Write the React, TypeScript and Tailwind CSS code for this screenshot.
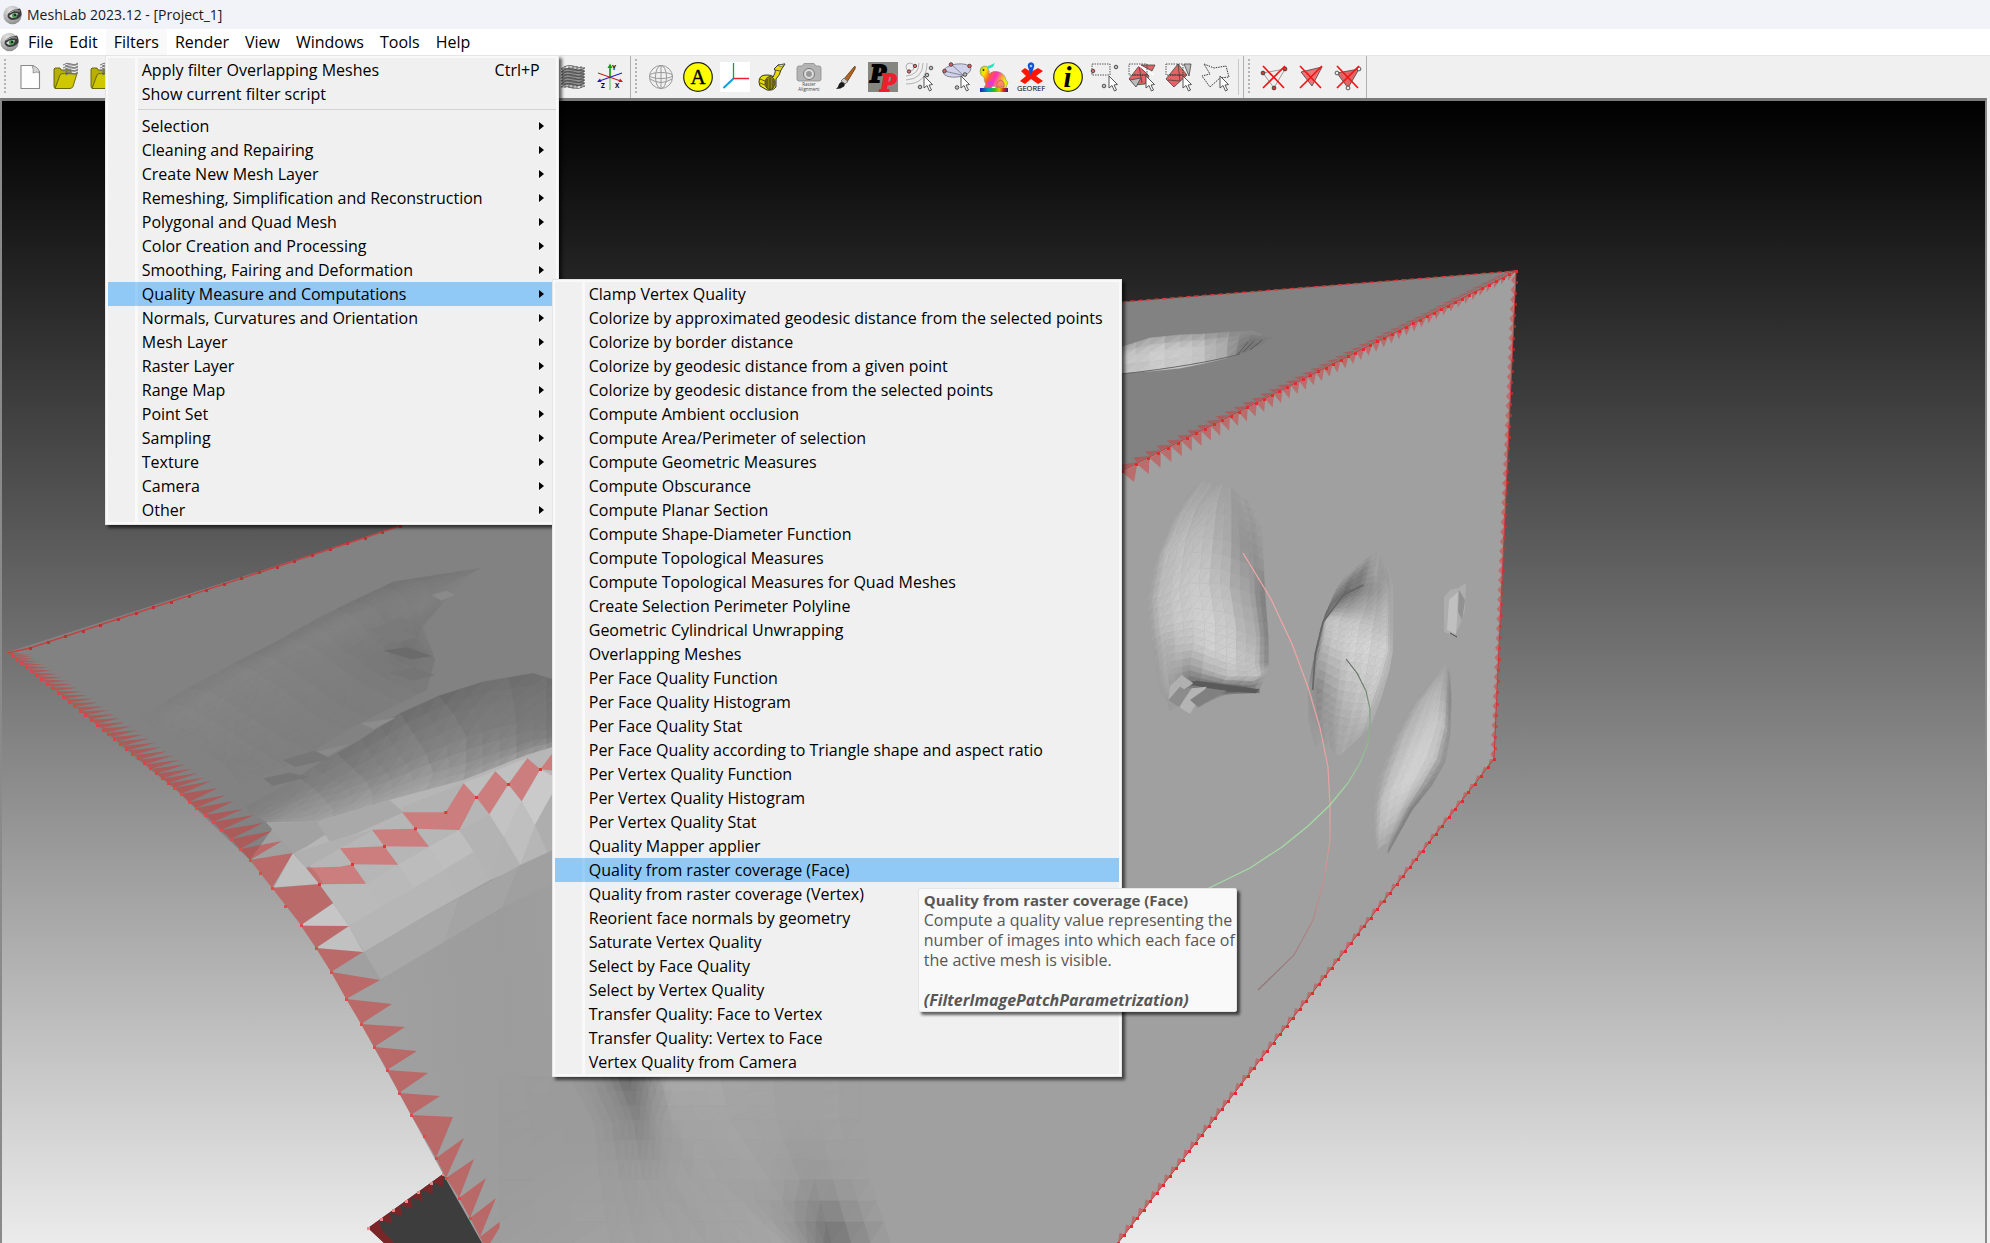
import type { ReactNode } from 'react';

interface MenuEntry {
  label: string;
  shortcut?: string;
  submenu?: boolean;
  separatorAfter?: boolean;
}

const MENU_BAR = ['File', 'Edit', 'Filters', 'Render', 'View', 'Windows', 'Tools', 'Help'];

const FILTER_MENU: MenuEntry[] = [
  { label: 'Apply filter Overlapping Meshes', shortcut: 'Ctrl+P' },
  { label: 'Show current filter script', separatorAfter: true },
  { label: 'Selection', submenu: true },
  { label: 'Cleaning and Repairing', submenu: true },
  { label: 'Create New Mesh Layer', submenu: true },
  { label: 'Remeshing, Simplification and Reconstruction', submenu: true },
  { label: 'Polygonal and Quad Mesh', submenu: true },
  { label: 'Color Creation and Processing', submenu: true },
  { label: 'Smoothing, Fairing and Deformation', submenu: true },
  { label: 'Quality Measure and Computations', submenu: true },
  { label: 'Normals, Curvatures and Orientation', submenu: true },
  { label: 'Mesh Layer', submenu: true },
  { label: 'Raster Layer', submenu: true },
  { label: 'Range Map', submenu: true },
  { label: 'Point Set', submenu: true },
  { label: 'Sampling', submenu: true },
  { label: 'Texture', submenu: true },
  { label: 'Camera', submenu: true },
  { label: 'Other', submenu: true },
];

const QUALITY_MENU: string[] = [
  'Clamp Vertex Quality',
  'Colorize by approximated geodesic distance from the selected points',
  'Colorize by border distance',
  'Colorize by geodesic distance from a given point',
  'Colorize by geodesic distance from the selected points',
  'Compute Ambient occlusion',
  'Compute Area/Perimeter of selection',
  'Compute Geometric Measures',
  'Compute Obscurance',
  'Compute Planar Section',
  'Compute Shape-Diameter Function',
  'Compute Topological Measures',
  'Compute Topological Measures for Quad Meshes',
  'Create Selection Perimeter Polyline',
  'Geometric Cylindrical Unwrapping',
  'Overlapping Meshes',
  'Per Face Quality Function',
  'Per Face Quality Histogram',
  'Per Face Quality Stat',
  'Per Face Quality according to Triangle shape and aspect ratio',
  'Per Vertex Quality Function',
  'Per Vertex Quality Histogram',
  'Per Vertex Quality Stat',
  'Quality Mapper applier',
  'Quality from raster coverage (Face)',
  'Quality from raster coverage (Vertex)',
  'Reorient face normals by geometry',
  'Saturate Vertex Quality',
  'Select by Face Quality',
  'Select by Vertex Quality',
  'Transfer Quality: Face to Vertex',
  'Transfer Quality: Vertex to Face',
  'Vertex Quality from Camera',
];

const OPEN_MENU = 'Filters';
const OPEN_SUBMENU = 'Quality Measure and Computations';
const HOVERED_FILTER = 'Quality from raster coverage (Face)';

/* ---------- Icons ---------- */

function EyeLogo() {
  return (
    <svg viewBox="0 0 20 20" className="size-5 shrink-0" aria-hidden="true">
      <defs>
        <radialGradient id="logo" cx="0.4" cy="0.25" r="0.8">
          <stop offset="0" stopColor="#e4e4e4" />
          <stop offset="0.6" stopColor="#b4b4b4" />
          <stop offset="1" stopColor="#888" />
        </radialGradient>
      </defs>
      <circle cx="9.500" cy="10" r="9.200" fill="url(#logo)" />
      <path d="M5 9 Q9 4 14 4.500 L17 3.500 Q19.500 8 18 11 Q15 15 9 15 Q5 14 4.500 11Z" fill="#3c3c3c" />
      <path d="M6 8 Q11 4.500 17 6" stroke="#aaa" strokeWidth="1" fill="none" />
      <path d="M6 11 Q10 7 15 8.500 Q14 12.500 9 13Z" fill="#d5ddd5" />
      <circle cx="11.500" cy="10.500" r="2.500" fill="#4a9455" />
      <circle cx="12" cy="10" r="1.100" fill="#101810" />
    </svg>
  );
}

function Svg({ children }: { children: ReactNode }) {
  return (
    <svg viewBox="0 0 30 30" className="size-[30px] overflow-visible" aria-hidden="true">
      {children}
    </svg>
  );
}

const cursor = (
  <path d="M19 14 L19 26 L22 23.500 L24.500 29 L26.500 28 L24 23 L27.500 22.500Z" fill="#fff" stroke="#444" strokeWidth="0.9" />
);

const newIcon = (
  <Svg>
    <path d="M6 3.500 H18 L24.500 10 V26.500 H6Z" fill="#fdfdfd" stroke="#8a8a8a" strokeWidth="1.100" />
    <path d="M17 3.500 Q19 8 18 11 Q22 9 24.500 11 Q24 5 17 3.500Z" fill="#d4d4d4" stroke="#888" strokeWidth="0.8" />
  </Svg>
);

const openIcon = (
  <Svg>
    <path d="M2 7 L3 6 H8 L9 8 H19 V14 L16 26 H3 Q2 26 2 24Z" fill="#b8b000" stroke="#5f5b00" strokeWidth="0.9" />
    <path d="M8 13 Q9 11.500 11 11.500 H25 L21 24.500 Q20 26.500 18 26.500 H3Z" fill="#cfc800" stroke="#5f5b00" strokeWidth="0.9" />
    {[1, 4, 7, 10].map(y => (
      <path key={y} d={`M11 ${y + 2} q4 -3 8 -1 t7 -1 M13 ${y + 3} q4 -2 7 -1 t6 -1`} fill="none" stroke="#777" strokeWidth="1" />
    ))}
  </Svg>
);

const gridIcon = (
  <Svg>
    <path d="M4 8 L14 4 L26 8 V22 L15 27 L4 23Z" fill="#bbb" />
    <g fill="none" stroke="#444" strokeWidth="0.7">
      {[7, 10, 13, 16, 19, 22, 25].map(y => (
        <path key={y} d={`M3 ${y} Q9 ${y - 5} 15 ${y - 3} T27 ${y - 1} Q20 ${y + 3} 15 ${y + 1} T3 ${y}`} />
      ))}
      {[5, 7, 9, 11, 13, 15, 17, 19, 21, 23, 25].map((x, i) => (
        <path key={x} d={`M${x} ${i % 2 ? 4 : 7} V${i % 2 ? 26 : 23}`} />
      ))}
    </g>
  </Svg>
);

const axesIcon = (
  <Svg>
    <path d="M15 28 V3" stroke="#9bd69b" strokeWidth="2" />
    <path d="M15 15 V4" stroke="#12a012" strokeWidth="1.500" />
    <path d="M12.500 6 L15 1.500 L17.500 6Z" fill="#12a012" />
    <path d="M3 11 L27 19.500" stroke="#c22" strokeWidth="1.200" />
    <path d="M28 20 L23.500 20 L25 16.500Z" fill="#c22" />
    <path d="M27 11 L3 19.500" stroke="#22b" strokeWidth="1.200" />
    <path d="M2 20 L6.500 20 L5 16.500Z" fill="#22b" />
    <text x="17" y="8" fontSize="6.500" fontWeight="700">Y</text>
    <text x="6" y="26" fontSize="6.500" fontWeight="700">Z</text>
    <text x="20" y="26" fontSize="6.500" fontWeight="700">X</text>
  </Svg>
);

const globeIcon = (
  <Svg>
    <g fill="none" stroke="#999" strokeWidth="1">
      <circle cx="15" cy="15" r="11.500" />
      <ellipse cx="15" cy="15" rx="5.500" ry="11.500" />
      <ellipse cx="15" cy="13.500" rx="11.500" ry="3" />
      <path d="M15 3 V27 M4 17 Q15 24 26 17" />
    </g>
  </Svg>
);

const labelIcon = (
  <Svg>
    <circle cx="15" cy="15" r="14.300" fill="#ff0" stroke="#222" strokeWidth="1.200" />
    <text x="15" y="22" textAnchor="middle" fontFamily="Liberation Serif" fontSize="21" stroke="#000" strokeWidth="0.4">A</text>
  </Svg>
);

const axisIcon = (
  <Svg>
    <rect width="30" height="30" fill="#fff" />
    <path d="M13.500 1 V16" stroke="#1a9a50" strokeWidth="1.300" />
    <path d="M13 16.500 H29" stroke="#ee2030" strokeWidth="1.500" />
    <path d="M13.500 16.500 L3.500 26" stroke="#00a2e8" strokeWidth="2" />
  </Svg>
);

const tapeIcon = (
  <Svg>
    <path d="M2 20 Q2 13 9 13 Q16 13 16 15 Q20 8 17 7 L21 3 L28 2 L24 8 Q23 13 19 17 V25 Q16 29 10 28 L3 24Z" fill="#e6dc00" stroke="#222" strokeWidth="0.9" />
    <ellipse cx="13" cy="21" rx="5" ry="6.500" fill="#8d8600" stroke="#333" strokeWidth="0.8" />
    <path d="M3 17 L8 19 M3 21 L8 23 M18 8 L23 9 M10 17 V26 M13 16 V27 M16 17 V26" stroke="#333" strokeWidth="0.8" />
    <path d="M21 3 L28 2 L24 5Z" fill="#ddd" stroke="#444" strokeWidth="0.6" />
  </Svg>
);

const cameraIcon = (
  <Svg>
    <path d="M3 6 Q3 4 5 4 L8 4 L10 1.500 H20 L22 4 H25 Q27 4 27 6 V17 Q27 19 25 19 H5 Q3 19 3 17Z" fill="#b4b4b4" stroke="#8d8d8d" strokeWidth="0.8" />
    <circle cx="15" cy="12" r="5.500" fill="#dedede" stroke="#777" />
    <circle cx="15" cy="12" r="3" fill="#999" />
    <text x="15" y="24" textAnchor="middle" fontSize="4.500" fill="#444">Raster</text>
    <text x="15" y="29" textAnchor="middle" fontSize="4.500" fill="#444">Alignment</text>
  </Svg>
);

const brushIcon = (
  <Svg>
    <path d="M13 17 L23 5 Q25 3 24 7 L16 20Z" fill="#b5651d" stroke="#5a3210" strokeWidth="0.8" />
    <path d="M10 19 L13 16 L17 19.500 L14 22Z" fill="#ccc" stroke="#555" strokeWidth="0.7" />
    <path d="M5 27 Q7 26 8 22 Q10 19 12 20.500 Q15 22 13 24.500 Q10 27 5 27Z" fill="#1b1b1b" />
  </Svg>
);

const ppIcon = (
  <Svg>
    <rect width="30" height="30" fill="#868680" />
    <text x="2" y="20" fontFamily="Liberation Serif" fontStyle="italic" fontWeight="700" fontSize="26" stroke="#000" strokeWidth="2">P</text>
    <text x="12" y="29" fontFamily="Liberation Serif" fontStyle="italic" fontWeight="700" fontSize="26" fill="#e8212a" stroke="#e8212a" strokeWidth="2">P</text>
  </Svg>
);

const pointWaveIcon = (
  <Svg>
    <g fill="none" stroke="#aaa" strokeWidth="0.9">
      <circle cx="5" cy="5" r="4" />
      <path d="M14 1 Q14 13 1 14 M18 1 Q18 17 1 18 M22 1 Q22 22 1 22" />
    </g>
    <g stroke="#333" strokeWidth="0.8">
      <circle cx="10" cy="4" r="1.700" fill="#e66" />
      <circle cx="4" cy="9.500" r="1.700" fill="#e66" />
      <circle cx="26" cy="6" r="1.800" fill="#bbb" />
      <circle cx="22" cy="13" r="1.800" fill="#bbb" />
      <circle cx="15" cy="25" r="1.800" fill="#bbb" />
    </g>
    {cursor}
  </Svg>
);

const ellipseSelectIcon = (
  <Svg>
    <ellipse cx="15" cy="8.500" rx="14" ry="6.500" fill="#cfd2e8" stroke="#778" strokeWidth="0.8" transform="rotate(-8 15 8.500)" />
    <path d="M2 9 L24 14 M9 2 L22 14" stroke="#667" strokeWidth="0.7" />
    <g stroke="#333" strokeWidth="0.8">
      <circle cx="2.500" cy="9" r="1.800" fill="#e55" />
      <circle cx="9" cy="2.500" r="1.800" fill="#e55" />
      <circle cx="27.500" cy="4" r="1.800" fill="#e55" />
      <circle cx="23" cy="12.500" r="1.800" fill="#bbb" />
      <circle cx="15" cy="25.500" r="1.800" fill="#bbb" />
    </g>
    {cursor}
  </Svg>
);

const bunnyIcon = (
  <Svg>
    <defs>
      <linearGradient id="rainbow" x1="0" x2="1" y1="0" y2="0.4">
        <stop offset="0" stopColor="#9be000" />
        <stop offset="0.25" stopColor="#ffe000" />
        <stop offset="0.45" stopColor="#ff5a30" />
        <stop offset="0.65" stopColor="#ff30c0" />
        <stop offset="0.85" stopColor="#ffa040" />
        <stop offset="1" stopColor="#e8f000" />
      </linearGradient>
      <linearGradient id="spectrum">
        <stop offset="0" stopColor="#2020b0" />
        <stop offset="0.3" stopColor="#00a0c0" />
        <stop offset="0.5" stopColor="#20c020" />
        <stop offset="0.7" stopColor="#e0c000" />
        <stop offset="0.85" stopColor="#d02020" />
        <stop offset="1" stopColor="#3020a0" />
      </linearGradient>
    </defs>
    <path
      d="M1 9 Q1 5 5 4 L8 4.500 L9 7 Q11 9 10 12 Q14 8 20 10 Q26 12 27 18 Q30 20 28 23 L27 26 H17 L16 24 Q13 24 12 26 H5 L7 22 Q5 20 5 15 Q1 14 1 9Z"
      fill="url(#rainbow)"
      stroke="#777"
      strokeWidth="0.5"
    />
    <path d="M8 4.500 L16 1 L14 5 L9 7Z" fill="#30e0c0" />
    <path d="M18 25 Q17 19 22 18 Q26 20 25 25Z" fill="#ff8a60" stroke="#a33a8a" strokeWidth="0.6" />
    <path d="M8 22 Q10 18 13 19 L15 23" fill="#d040e0" />
    <circle cx="4.500" cy="8" r="0.9" fill="#222" />
    <rect x="1" y="26" width="28" height="4" fill="url(#spectrum)" />
  </Svg>
);

const georefIcon = (
  <Svg>
    <path d="M5 9 L9 6 L15 10 L22 6 L27 9 L20 14 L27 19 L22 22 L15 17 L9 22 L4 19 L10 14Z" fill="#ff1500" />
    <path d="M15 14 L12 5 A3.300 3.300 0 1 1 18 5Z" fill="#1450d8" />
    <circle cx="15" cy="4" r="1.300" fill="#9cf" />
    <text x="15" y="29" textAnchor="middle" fontFamily="Open Sans" fontSize="7.500">GEOREF</text>
  </Svg>
);

const infoIcon = (
  <Svg>
    <circle cx="15" cy="15" r="14.300" fill="#ff0" stroke="#222" strokeWidth="1.200" />
    <text x="14.500" y="24.500" textAnchor="middle" fontFamily="Liberation Serif" fontStyle="italic" fontWeight="700" fontSize="29">i</text>
  </Svg>
);

const vertexSelectIcon = (
  <Svg>
    <rect x="2" y="2" width="18" height="11" fill="none" stroke="#333" strokeDasharray="1.500 1" strokeWidth="0.8" />
    <g stroke="#333" strokeWidth="0.8">
      <circle cx="3" cy="9" r="1.800" fill="#e66" />
      <circle cx="26" cy="5" r="1.800" fill="#bbb" />
      <circle cx="14" cy="24" r="1.800" fill="#bbb" />
    </g>
    {cursor}
  </Svg>
);

const faceSelectIcon = (
  <Svg>
    <path d="M12 4 L22 14 L18 22 L8 23 L2 17Z" fill="#e26464" stroke="#444" strokeWidth="0.8" />
    <path d="M14 3 H28 L25 9Z" fill="#e26464" stroke="#444" strokeWidth="0.8" />
    <path d="M3 18 L14 16 L9 25Z" fill="#bbb" stroke="#444" strokeWidth="0.8" />
    <path d="M6 13 H21 M12 4 L15 21" stroke="#444" strokeWidth="0.8" />
    <path d="M11 3 L27 13" stroke="#fff" strokeWidth="1.500" />
    <rect x="2" y="2" width="18" height="11" fill="none" stroke="#333" strokeDasharray="1.500 1" strokeWidth="0.8" />
    {cursor}
  </Svg>
);

const connectedSelectIcon = (
  <Svg>
    <path d="M14 2 L23 13 L10 25 L2 17Z" fill="#e26464" stroke="#444" strokeWidth="0.8" />
    <path d="M20 2 H27 L25 14Z" fill="#bbb" stroke="#444" strokeWidth="0.8" />
    <path d="M6 13 H22 M14 2 L16 19 M4 18 L16 19" stroke="#444" strokeWidth="0.8" />
    <rect x="2" y="2" width="17" height="11" fill="none" stroke="#333" strokeDasharray="1.500 1" strokeWidth="0.8" />
    {cursor}
  </Svg>
);

const lassoIcon = (
  <Svg>
    <path d="M3 2 L13 6 L25 4 L28 15 L19 16 L9 25 L1 14 L9 12Z" fill="none" stroke="#333" strokeDasharray="1.500 1" />
    {cursor}
  </Svg>
);

const redCross = <path d="M4 4 L25 26 M26 4 L4 26" stroke="#f31414" strokeWidth="1.700" />;

const deleteVertexIcon = (
  <Svg>
    <path d="M4 11 L26 7 L15 26Z" fill="#eee" stroke="#888" strokeWidth="0.8" />
    <g fill="#d33" stroke="#333" strokeWidth="0.8">
      <circle cx="4" cy="11" r="1.900" />
      <circle cx="26" cy="7" r="1.900" />
      <circle cx="15" cy="26" r="1.900" />
    </g>
    {redCross}
  </Svg>
);

const deleteFaceIcon = (
  <Svg>
    <path d="M5 10 L26 5 L16 24Z" fill="#ee7575" stroke="#444" strokeWidth="0.8" />
    {redCross}
  </Svg>
);

const deleteBothIcon = (
  <Svg>
    <path d="M4 11 L26 7 L15 26Z" fill="#e26464" stroke="#444" strokeWidth="0.8" />
    <g fill="#eee" stroke="#333" strokeWidth="0.8">
      <circle cx="4" cy="11" r="1.900" />
      <circle cx="26" cy="7" r="1.900" />
      <circle cx="15" cy="26" r="1.900" />
    </g>
    {redCross}
  </Svg>
);

const VIEW_TOOLS: [string, ReactNode][] = [
  ['Trackball', globeIcon],
  ['Labels', labelIcon],
  ['Axis', axisIcon],
  ['Measure', tapeIcon],
  ['Raster alignment', cameraIcon],
  ['Paint', brushIcon],
  ['PickPoints', ppIcon],
  ['Point selection', pointWaveIcon],
  ['Plane fitting', ellipseSelectIcon],
  ['Quality mapper', bunnyIcon],
  ['Georef', georefIcon],
  ['Info', infoIcon],
  ['Select vertices', vertexSelectIcon],
  ['Select faces', faceSelectIcon],
  ['Select connected', connectedSelectIcon],
  ['Polyline selection', lassoIcon],
];

const DELETE_TOOLS: [string, ReactNode][] = [
  ['Delete vertices', deleteVertexIcon],
  ['Delete faces', deleteFaceIcon],
  ['Delete faces and vertices', deleteBothIcon],
];

/* ---------- Mesh drawing ---------- */

type Pt = [number, number];
/** x, y, grey level */
type Node3 = [number, number, number];

const RED = '#d53333';

const lerp = (a: number, b: number, t: number) => a + (b - a) * t;

/** Row of small triangles along a line, leaning by (dx, dy) which may grow towards the end */
function teeth(from: Pt, to: Pt, count: number, startTip: Pt, endTip: Pt, ease = 1): string {
  let d = '';
  for (let i = 0; i < count; i++) {
    const a = Math.pow(i / count, ease);
    const b = Math.pow((i + 1) / count, ease);
    const ax = lerp(from[0], to[0], a);
    const ay = lerp(from[1], to[1], a);
    const bx = lerp(from[0], to[0], b);
    const by = lerp(from[1], to[1], b);
    const tx = ax + lerp(startTip[0], endTip[0], a);
    const ty = ay + lerp(startTip[1], endTip[1], a);
    d += `M${ax.toFixed(1)} ${ay.toFixed(1)}L${tx.toFixed(1)} ${ty.toFixed(1)}L${bx.toFixed(1)} ${by.toFixed(1)}Z`;
  }
  return d;
}

function dots(from: Pt, to: Pt, count: number, ease = 1): string {
  let d = '';
  for (let i = 0; i <= count; i++) {
    const t = Math.pow(i / count, ease);
    d += `M${(lerp(from[0], to[0], t) - 1).toFixed(0)} ${(lerp(from[1], to[1], t) - 1).toFixed(0)}h3v3h-3z`;
  }
  return d;
}

/** Point inside a cell of the control grid */
function sample(grid: Node3[][], r: number, c: number, u: number, v: number): Node3 {
  const mix = (k: 0 | 1 | 2) =>
    lerp(lerp(grid[r][c][k], grid[r][c + 1][k], u), lerp(grid[r + 1][c][k], grid[r + 1][c + 1][k], u), v);
  return [mix(0), mix(1), mix(2)];
}

/** Flat-shaded triangles spanned over a coarse grid of control points, lightly streaked by column */
function Surface({ grid, sub, grain }: { grid: Node3[][]; sub: number; grain: number }) {
  const faces: ReactNode[] = [];
  for (let r = 0; r < grid.length - 1; r++) {
    for (let c = 0; c < grid[r].length - 1; c++) {
      for (let i = 0; i < sub; i++) {
        for (let j = 0; j < sub; j++) {
          const a = sample(grid, r, c, j / sub, i / sub);
          const b = sample(grid, r, c, (j + 1) / sub, i / sub);
          const e = sample(grid, r, c, (j + 1) / sub, (i + 1) / sub);
          const f = sample(grid, r, c, j / sub, (i + 1) / sub);
          [[a, b, f], [b, e, f]].forEach((tri, k) => {
            const streak = (((c * sub + j) * 2) % 5) - 2;
            const wobble = streak * 0.4 + (k ? 0.3 : -0.3);
            const grey = Math.round((tri[0][2] + tri[1][2] + tri[2][2]) / 3 + wobble * grain);
            const fill = `rgb(${grey},${grey},${grey})`;
            faces.push(
              <polygon
                key={`${r}-${c}-${i}-${j}-${k}`}
                points={tri.map(p => `${p[0].toFixed(1)},${p[1].toFixed(1)}`).join(' ')}
                fill={fill}
                stroke={fill}
                strokeWidth="0.6"
              />,
            );
          });
        }
      }
    }
  }
  return <g>{faces}</g>;
}

/** Border faces along the curved left side: base, tip, next base */
const LEFT_TEETH = [
  '174,788 211,781 181,794', '181,794 218,788 189,802', '189,802 226,795 196,808', '196,808 234,801 205,815',
  '205,815 243,809 213,822', '213,822 254,815 221,830', '221,830 263,823 231,839', '231,839 272,831 240,849',
  '240,849 282,841 250,860', '250,860 293,853 272,888', '272,888 319,884 333,903 301,925',
  '301,926 349,926 316,948', '316,948 363,952 331,972', '331,972 380,980 346,999', '346,999 392,1004 361,1024',
  '361,1024 405,1027 374,1047', '374,1047 417,1051 387,1070', '387,1070 428,1073 399,1093',
  '399,1093 440,1096 411,1115', '411,1115 453,1117 436,1158', '436,1158 464,1138 446,1178',
  '446,1178 474,1159 459,1198', '459,1198 486,1178 470,1218', '470,1218 496,1198 480,1237',
  '480,1237 506,1217 486,1250',
];

const LEFT_DOTS: Pt[] = [
  [174, 788], [181, 794], [189, 802], [196, 808], [205, 815], [213, 822], [221, 830], [231, 839], [240, 849],
  [250, 860], [260, 873], [272, 888], [285, 906], [301, 925], [316, 948], [331, 972], [346, 999], [361, 1024],
  [374, 1047], [387, 1070], [399, 1093], [411, 1115], [424, 1136], [436, 1158], [446, 1178], [459, 1198], [470, 1218],
];

/** Crease faces, in thirds of a unit from (200, 640) */
const CREASE = [
  '318,683 420,680 457,673 498,731 358,733', '420,625 553,619 594,674 457,673', '516,569 646,566 687,620 553,619',
  '606,517 737,517 791,430 829,472 778,570 646,566', '829,472 886,394 925,433 868,523',
  '925,433 982,355 1021,388 965,484', '1021,388 1080,310 1080,394',
];

/** Upper depression, in thirds of a unit from (140, 530) */
const HOLLOW: Node3[][] = [
  [[0, 560, 130], [100, 500, 126], [280, 400, 124], [400, 340, 120], [540, 262, 121], [640, 212, 118], [760, 155, 116], [1020, 115, 120]],
  [[40, 590, 131], [180, 510, 132], [340, 420, 131], [460, 350, 130], [590, 290, 130], [700, 230, 126], [820, 180, 124], [1000, 125, 122]],
  [[150, 640, 131], [260, 560, 130], [420, 470, 129], [540, 400, 127], [640, 350, 124], [740, 280, 125], [830, 230, 128], [980, 145, 129]],
  [[250, 700, 129], [380, 640, 128], [530, 560, 126], [650, 480, 125], [740, 420, 120], [800, 360, 114], [840, 290, 120], [960, 160, 130]],
  [[300, 760, 130], [480, 690, 127], [620, 600, 126], [760, 530, 125], [860, 480, 124], [885, 390, 121], [850, 290, 128], [950, 170, 130]],
];

/** Dark back of the fold, in thirds of a unit from (200, 640) */
const FOLD: Node3[][] = [
  [[140, 500, 128], [250, 440, 126], [340, 380, 122], [480, 300, 114], [600, 220, 110], [715, 168, 107], [850, 125, 110], [1000, 100, 110], [1080, 125, 114]],
  [[150, 520, 132], [280, 470, 130], [400, 420, 130], [520, 350, 126], [640, 280, 123], [760, 220, 119], [880, 190, 119], [1000, 170, 117], [1080, 190, 117]],
  [[180, 535, 138], [300, 500, 142], [440, 450, 140], [560, 400, 136], [680, 340, 132], [800, 290, 128], [900, 260, 124], [1000, 240, 121], [1080, 250, 119]],
  [[200, 547, 148], [340, 525, 152], [460, 490, 154], [580, 445, 154], [700, 400, 152], [800, 370, 146], [900, 335, 138], [1000, 300, 128], [1080, 290, 126]],
  [[200, 550, 155], [340, 550, 160], [460, 515, 162], [570, 480, 164], [680, 450, 164], [790, 425, 162], [900, 378, 158], [1000, 342, 156], [1080, 318, 155]],
];

/** Lit facets of the fold, same local units as the crease */
const BUMP: [string, string][] = [
  ['485,250 588,233 520,268', '#8c8c8c'],
  ['350,335 450,311 382,348', '#8a8a8a'],
  ['250,360 345,332 390,357 285,380', '#777777'],
  ['190,415 270,398 325,411 218,437', '#767676'],
  ['200,548 350,545 568,480 790,420 980,345 1056,322 1080,318 1080,640 869,720 690,820 492,936 446,858 350,700', '#b6b6b6'],
  ['200,548 350,545 460,530 318,620 280,640', '#a2a2a2'],
  ['350,545 568,480 610,517 470,580 390,605', '#a9a9a9'],
  ['280,640 390,605 520,570 420,625 318,683', '#b0b0b0'],
  ['610,500 790,430 740,515 606,517', '#b2b2b2'],
  ['790,430 886,392 829,472', '#bebebe'],
  ['886,392 980,355 925,433', '#c0c0c0'],
  ['980,355 1080,312 1021,388', '#b7b7b7'],
  ['222,742 278,640 318,683 358,733', '#bfbfbf'],
  ['303,856 400,790 446,858', '#c6c6c6'],
  ['348,924 446,858 490,936', '#c1c1c1'],
  ['358,733 498,731 544,800 446,858 400,790', '#bababa'],
  ['498,731 594,674 640,745 544,800', '#b9b9b9'],
  ['594,674 687,620 732,690 640,745', '#bcbcbc'],
  ['687,620 778,570 822,635 732,690', '#bebebe'],
  ['778,570 868,523 912,592 869,720 822,635', '#b3b3b3'],
  ['868,523 925,433 965,484 912,592', '#c3c3c3'],
  ['912,592 965,484 1005,555 960,675', '#bfbfbf'],
  ['965,484 1021,388 1080,420 1005,555', '#cacaca'],
  ['1005,555 1080,420 1080,640 1042,635', '#aeaeae'],
  ['822,635 869,720 778,770 732,690', '#b5b5b5'],
  ['869,720 912,592 960,675', '#b2b2b2'],
  ['492,936 690,820 780,772 733,905 640,960 542,1018', '#a8a8a8'],
  ['733,905 780,772 960,676 908,802', '#a4a4a4'],
  ['908,802 960,676 1080,620 1080,720', '#a0a0a0'],
];

/** Left protrusion of the right face, in thirds of a unit from (1130, 470) */
const NOSE: Node3[][] = [
  [[195, 45, 161], [225, 35, 163], [260, 45, 163], [290, 40, 160], [330, 80, 156], [365, 100, 160]],
  [[125, 150, 163], [165, 125, 176], [220, 100, 172], [285, 90, 165], [345, 150, 150], [395, 170, 158]],
  [[75, 270, 162], [120, 230, 188], [190, 200, 190], [280, 210, 174], [355, 240, 142], [400, 270, 150]],
  [[52, 390, 162], [95, 380, 190], [175, 340, 203], [270, 340, 190], [360, 370, 160], [405, 370, 120]],
  [[62, 480, 163], [100, 470, 190], [190, 450, 208], [290, 470, 203], [380, 500, 172], [415, 500, 125]],
  [[75, 580, 160], [108, 530, 176], [190, 520, 200], [290, 560, 208], [375, 580, 190], [416, 580, 130]],
  [[85, 640, 160], [112, 600, 170], [180, 585, 160], [290, 620, 190], [385, 620, 195], [414, 600, 165]],
  [[90, 660, 160], [118, 650, 165], [180, 635, 115], [270, 650, 95], [340, 662, 90], [390, 655, 150]],
  [[115, 700, 160], [145, 705, 150], [180, 690, 165], [230, 672, 135], [320, 666, 90], [388, 668, 110]],
  [[118, 725, 160], [148, 715, 160], [180, 732, 160], [210, 710, 158], [270, 675, 150], [330, 668, 130]],
];

/** Middle protrusion, same local units */
const CHEEK: Node3[][] = [
  [[640, 325, 160], [680, 290, 158], [720, 258, 160], [745, 245, 160], [760, 270, 160], [775, 290, 162]],
  [[618, 360, 150], [650, 340, 120], [700, 310, 125], [735, 300, 165], [760, 310, 150], [788, 345, 165]],
  [[600, 400, 120], [640, 375, 100], [690, 360, 130], [730, 355, 145], [768, 365, 165], [789, 390, 168]],
  [[585, 435, 95], [610, 415, 145], [670, 415, 165], [725, 420, 172], [768, 425, 185], [789, 450, 165]],
  [[572, 475, 100], [590, 445, 195], [650, 455, 200], [710, 462, 195], [768, 470, 190], [789, 500, 168]],
  [[560, 530, 105], [585, 500, 192], [640, 520, 208], [700, 520, 212], [768, 540, 208], [788, 545, 175]],
  [[545, 600, 120], [570, 570, 165], [630, 600, 190], [690, 610, 205], [745, 620, 205], [778, 600, 178]],
  [[535, 660, 155], [560, 650, 135], [620, 690, 172], [670, 700, 190], [715, 700, 200], [755, 680, 170]],
  [[535, 750, 160], [560, 730, 142], [610, 760, 160], [655, 770, 175], [700, 760, 185], [725, 760, 170]],
  [[555, 830, 160], [575, 810, 155], [615, 850, 160], [630, 855, 168], [680, 810, 170], [722, 770, 165]],
];

const RIDGE: Node3[][] = [
  [[1440, 672, 160], [1443, 668, 162], [1445, 665, 162], [1447, 668, 160], [1450, 675, 150]],
  [[1412, 705, 161], [1425, 700, 178], [1435, 692, 185], [1445, 690, 170], [1451, 700, 130]],
  [[1393, 740, 162], [1410, 730, 185], [1428, 722, 200], [1443, 722, 195], [1450, 735, 140]],
  [[1378, 780, 163], [1398, 765, 195], [1415, 755, 210], [1433, 758, 200], [1445, 762, 140]],
  [[1374, 810, 163], [1385, 795, 195], [1402, 785, 212], [1420, 780, 198], [1432, 785, 130]],
  [[1374, 835, 162], [1382, 825, 190], [1394, 815, 198], [1405, 808, 180], [1412, 810, 120]],
  [[1376, 852, 160], [1381, 846, 170], [1386, 843, 170], [1389, 846, 150], [1388, 853, 130]],
];

const TOP_BUMP: Node3[][] = [
  [[1105, 355, 140], [1122, 347, 160], [1150, 338, 165], [1180, 335, 160], [1205, 334, 155], [1230, 332, 140], [1252, 331, 140], [1274, 338, 132]],
  [[1105, 364, 170], [1122, 357, 195], [1150, 352, 205], [1180, 348, 205], [1205, 346, 190], [1228, 342, 165], [1250, 339, 115], [1268, 339, 130]],
  [[1105, 376, 170], [1122, 373, 185], [1150, 371, 200], [1180, 368, 205], [1205, 363, 190], [1227, 358, 165], [1245, 352, 110], [1262, 344, 130]],
];

/** Soft relief at the bottom of the front face */
const LOWER_RELIEF: Node3[][] = [
  [[500, 1077, 157], [570, 1077, 154], [602, 1077, 142], [626, 1077, 110], [646, 1077, 134], [668, 1077, 170], [720, 1077, 167], [800, 1077, 161], [860, 1077, 160]],
  [[500, 1130, 157], [595, 1125, 153], [620, 1120, 142], [640, 1120, 134], [655, 1120, 150], [680, 1120, 164], [730, 1120, 164], [800, 1120, 161], [860, 1120, 160]],
  [[500, 1180, 157], [600, 1180, 157], [630, 1180, 156], [650, 1180, 157], [675, 1180, 160], [720, 1180, 162], [770, 1180, 162], [815, 1180, 152], [870, 1180, 160]],
  [[500, 1243, 158], [610, 1243, 160], [650, 1243, 161], [690, 1243, 162], [740, 1243, 163], [785, 1243, 165], [808, 1243, 142], [832, 1243, 112], [890, 1243, 160]],
];

function polys(list: [string, string][]) {
  return list.map(([points, fill]) => <polygon key={points} points={points} fill={fill} stroke={fill} strokeWidth="0.5" />);
}

function MeshView() {
  return (
    <svg viewBox="2 101 1900 1142" preserveAspectRatio="xMinYMin meet" className="block size-full" role="img" aria-label="Mesh view">
      <defs>
        <linearGradient id="front" gradientUnits="userSpaceOnUse" x1="380" x2="600" y1="1060" y2="1040">
          <stop offset="0" stopColor="#a0a0a0" />
          <stop offset="0.6" stopColor="#9c9c9c" />
          <stop offset="1" stopColor="#a0a0a0" />
        </linearGradient>
        <linearGradient id="redArc" x1="0" x2="0" y1="0" y2="1">
          <stop offset="0" stopColor="#f3a8a8" />
          <stop offset="0.6" stopColor="#e8a0a0" />
          <stop offset="1" stopColor="#8f7474" />
        </linearGradient>
        <linearGradient id="greenArc" gradientUnits="userSpaceOnUse" x1="1346" x2="1340" y1="659" y2="800">
          <stop offset="0" stopColor="#5f665f" />
          <stop offset="0.5" stopColor="#8bb08b" />
          <stop offset="1" stopColor="#a4dca4" />
        </linearGradient>
      </defs>

      {/* inner side seen through the opening */}
      <polygon points="443,1174 368,1228 384,1243 500,1243" fill="#3d3d3d" />
      <path d={teeth([368, 1228], [443, 1174], 7, [14, 2], [10, 6])} fill="#7a2629" />
      <path d="M368 1228 L384 1243 H394 L380 1228Z" fill="#7a2629" />
      <path d={dots([368, 1228], [443, 1174], 6)} fill="#e88" />

      {/* top face */}
      <polygon points="8,652 400,526 560,474 1122,302 1516,271 1122,471 560,800 250,860 174,788 131,755" fill="#828282" />
      {/* front and right faces */}
      <path
        d="M250 860 L272 888 L301 925 L331 972 L361 1024 L399 1093 L443 1174 L482 1243 H1118 L1494 759 L1516 271 L1122 471 L552 740 L300 790Z"
        fill="url(#front)"
      />

      <g transform="translate(140 530) scale(0.33333)">
        <Surface grid={HOLLOW} sub={4} grain={1} />
        <polygon points="730,362 800,352 875,378 815,388" fill="#6b6b6b" />
        <polygon points="690,300 780,262 845,280 785,298 832,320 770,338" fill="#7a7a7a" />
        <polygon points="750,430 820,412 885,436 820,452" fill="#757575" />
        <polygon points="875,195 920,182 945,194 905,212" fill="#8a8a8a" />
      </g>

      <g transform="translate(200 640) scale(0.33333)">
        <Surface grid={FOLD} sub={2} grain={2} />
        {polys(BUMP)}
        {CREASE.map(p => (
          <polygon key={p} points={p} fill="#e24444" fillOpacity="0.5" />
        ))}
        <g fill="#e03838">
          {[[358, 733], [457, 673], [553, 619], [646, 566], [737, 517], [829, 472], [925, 433], [1021, 388]].map(([x, y]) => (
            <rect key={x} x={x - 4} y={y - 4} width="9" height="9" />
          ))}
        </g>
      </g>

      {/* left border faces */}
      <g fill={RED} fillOpacity="0.5">
        <path d={teeth([8, 652], [174, 788], 34, [22, 3], [37, -6], 1.2)} />
        {LEFT_TEETH.map(p => (
          <polygon key={p} points={p} />
        ))}
      </g>
      <path d={dots([8, 652], [174, 788], 30, 1.1)} fill="#d44" />
      {LEFT_DOTS.map(([x, y]) => (
        <rect key={y} x={x - 1} y={y - 1} width="3" height="3" fill="#de4c4c" />
      ))}
      <path d="M8 653 L30 648 L400 526" stroke="#c24343" strokeWidth="1.500" fill="none" />
      <path d={dots([30, 648], [400, 526], 21)} fill="#b93434" />

      <Surface grid={LOWER_RELIEF} sub={3} grain={1} />
      <Surface grid={TOP_BUMP} sub={2} grain={4} />
      <path d="M1240 354 Q1200 365 1122 374" stroke="#666" fill="none" />
      <path d="M1243 352 L1254 341 M1250 350 L1262 340 M1238 354 L1248 342" stroke="#5a5a5a" fill="none" />

      <g transform="translate(1130 470) scale(0.33333)">
        <Surface grid={NOSE} sub={3} grain={4} />
        <polygon points="155,640 200,632 388,658 378,670 290,664" fill="#5a5a5a" />
        <polygon points="120,648 155,615 190,640 115,690" fill="#b0b0b0" />
        <polygon points="115,690 150,650 175,665 148,712" fill="#8c8c8c" />
        <polygon points="148,712 185,655 230,650 180,732" fill="#b4b4b4" />
        <polygon points="180,690 230,655 290,662 205,712" fill="#808080" />
        <Surface grid={CHEEK} sub={3} grain={4} />
        <path d="M548 660 L556 550 L580 455 L640 375 L700 345" stroke="#666" strokeWidth="5" fill="none" />
      </g>

      {/* small nub */}
      <polygon points="1444,597 1450,590 1458,588 1466,583 1465,610 1461,622 1455,636 1444,632" fill="#adadad" />
      <polygon points="1449,600 1458,592 1457,620 1456,634 1447,630" fill="#c0c0c0" />
      <polygon points="1459,590 1465,600 1462,620 1458,612" fill="#919191" />
      <path d="M1450 633 L1457 637" stroke="#444" strokeWidth="1" />

      <Surface grid={RIDGE} sub={3} grain={4} />

      {/* edge between top and right faces */}
      <g fill={RED} fillOpacity="0.47">
        <path d={teeth([1122, 472], [1516, 271], 46, [12, 10], [-1, 6], 0.85)} />
        <path d={teeth([1122, 470], [1516, 269], 46, [-4, -5], [-8, 1], 0.85)} />
        <path d={teeth([1515, 275], [1494, 759], 50, [-4, 5], [-4, 5])} />
        <path d={teeth([1494, 759], [1118, 1243], 58, [-4, 0], [-5, -2])} />
      </g>
      <g fill="none" stroke="#cf3a3a" strokeWidth="1">
        <path d="M1122 302 L1516 271" strokeDasharray="5 3" strokeWidth="1.500" />
        <path d="M1122 471 L1516 271 L1494 759 L1118 1243" />
      </g>
      <g fill="#dd2f2f">
        <path d={dots([1122, 471], [1516, 271], 50, 0.85)} />
        <path d={dots([1516, 271], [1494, 759], 44)} fillOpacity="0.6" />
        <path d={dots([1494, 759], [1118, 1243], 58)} />
      </g>

      {/* trackball arcs */}
      <path
        d="M1243 553 L1271 599 L1292 644 L1308 687 L1320 728 L1328 767 L1330 805 L1330 840 L1324 880 L1313 920 L1294 955 L1258 990"
        stroke="url(#redArc)"
        strokeWidth="1.200"
        fill="none"
      />
      <path
        d="M1346 659 L1357 673 L1366 691 L1370 709 L1370 724 L1368 743 L1360 763 L1348 783 L1330 805 L1308 826 L1282 847 L1250 868 L1205 890"
        stroke="url(#greenArc)"
        strokeWidth="1.200"
        fill="none"
      />
    </svg>
  );
}

/* ---------- Menus ---------- */

const menuPanel =
  'absolute z-10 border border-[#e5e5e5] bg-[#f0f0f0] p-[2px] shadow-[3px_3px_3px_rgba(0,0,0,0.6)] outline-2 -outline-offset-3 outline-[#f9f9f9]';

function FilterTooltip() {
  return (
    <div
      role="tooltip"
      className="absolute top-full left-[363px] z-20 mt-[6px] w-max rounded-[2px] border border-[#e5e5e5] bg-[#f9f9f9] py-[1px] pr-px pl-[5px] leading-5 text-[#575757] shadow-[3px_3px_3px_rgba(0,0,0,0.6)]"
    >
      <p className="text-[15px] font-bold">{HOVERED_FILTER}</p>
      <p>
        Compute a quality value representing the
        <br />
        number of images into which each face of
        <br />
        the active mesh is visible.
      </p>
      <p className="mt-5 font-bold italic">(FilterImagePatchParametrization)</p>
    </div>
  );
}

function QualitySubmenu() {
  return (
    <ul role="menu" className={`${menuPanel} -top-[3px] left-full -ml-1 w-[570px]`}>
      {QUALITY_MENU.map(label => (
        <li key={label} role="none" className="relative">
          <button
            role="menuitem"
            className={`flex h-6 w-full items-center text-left ${label === HOVERED_FILTER ? 'bg-[#90c8f6]' : ''}`}
          >
            <span className={`mr-1 h-full w-[30px] border-r-3 ${label === HOVERED_FILTER ? 'border-white/10' : 'border-white/60'}`} />
            <span className="whitespace-nowrap">{label}</span>
          </button>
          {label === HOVERED_FILTER && <FilterTooltip />}
        </li>
      ))}
    </ul>
  );
}

function FiltersMenu() {
  return (
    <ul role="menu" className={`${menuPanel} top-full -left-px w-[454px]`}>
      {FILTER_MENU.map(entry => (
        <li key={entry.label} role="none" className="relative">
          <button
            role="menuitem"
            className={`flex h-6 w-full items-center text-left ${entry.label === OPEN_SUBMENU ? 'bg-[#90c8f6]' : ''}`}
          >
            <span className={`mr-1 h-full w-[30px] border-r-3 ${entry.label === OPEN_SUBMENU ? 'border-white/10' : 'border-white/60'}`} />
            <span className="flex-1 whitespace-nowrap">{entry.label}</span>
            {entry.shortcut && <span className="mr-4">{entry.shortcut}</span>}
            {entry.submenu && (
              <svg viewBox="0 0 5 8" className="mr-3 h-2 w-[5px]" aria-hidden="true">
                <path d="M0 0 L5 4 L0 8Z" />
              </svg>
            )}
          </button>
          {entry.separatorAfter && (
            <div className="flex h-2">
              <span className="w-[30px] border-r-3 border-white/60" />
              <span className="mt-[3px] flex-1 border-t border-[#d4d4d4]" />
            </div>
          )}
          {entry.label === OPEN_SUBMENU && <QualitySubmenu />}
        </li>
      ))}
    </ul>
  );
}

function MenuBar() {
  return (
    <nav className="flex h-[26px] items-center bg-white">
      <EyeLogo />
      <ul role="menubar" className="flex h-full">
        {MENU_BAR.map(name => (
          <li key={name} role="none" className="relative">
            <button role="menuitem" className={`h-full rounded-t px-2 ${name === OPEN_MENU ? 'bg-[#f9f9f9]' : ''}`}>
              {name}
            </button>
            {name === OPEN_MENU && <FiltersMenu />}
          </li>
        ))}
      </ul>
    </nav>
  );
}

/* ---------- Toolbar ---------- */

function Handle() {
  return <span className="mr-[5px] ml-1 h-9 w-[2px] bg-[repeating-linear-gradient(#b4b4b4_0_2px,transparent_2px_4px)]" />;
}

function Tools({ items }: { items: [string, ReactNode][] }) {
  return (
    <>
      {items.map(([name, icon], i) => (
        <button key={i} aria-label={name} className="flex w-[37px] items-center justify-center">
          {icon}
        </button>
      ))}
    </>
  );
}

function Toolbar() {
  return (
    <div className="flex h-[43px] shrink-0 items-center border-t border-[#e4e4e4] bg-[#f0f0f0]">
      <div className="flex h-full w-[631px] items-center border-r border-[#b0b0b0]">
        <Handle />
        <Tools items={[['New project', newIcon], ['Open project', openIcon], ['Import mesh', openIcon]]} />
        <div className="ml-auto flex pr-[2px]">
          <Tools items={[['Points', gridIcon], ['Show axes', axesIcon]]} />
        </div>
      </div>
      <div className="flex h-full items-center border-r border-[#b0b0b0] pr-1">
        <Handle />
        <Tools items={VIEW_TOOLS} />
        <span className="ml-1 h-9 border-l border-[#c8c8c8]" />
      </div>
      <div className="flex h-full items-center border-r border-[#b0b0b0]">
        <Handle />
        <Tools items={DELETE_TOOLS} />
      </div>
    </div>
  );
}

export default function App() {
  return (
    <div className="flex h-screen flex-col overflow-hidden bg-[#f0f0f0] font-['Open_Sans','Noto_Sans_CJK_SC',sans-serif] text-[16px] leading-5 text-black">
      <header className="flex h-[29px] shrink-0 items-center gap-1 bg-[#f1f3f9] pl-[3px] text-[14px] text-[#1a1a1a]">
        <EyeLogo />
        <h1>MeshLab 2023.12 - [Project_1]</h1>
      </header>
      <MenuBar />
      <Toolbar />
      <main className="mr-[3px] min-h-0 flex-1 border-x-2 border-t-3 border-[#8a8a8a] border-t-[#7a7a7a] bg-[linear-gradient(#000,#ebebeb)]">
        <MeshView />
      </main>
    </div>
  );
}
